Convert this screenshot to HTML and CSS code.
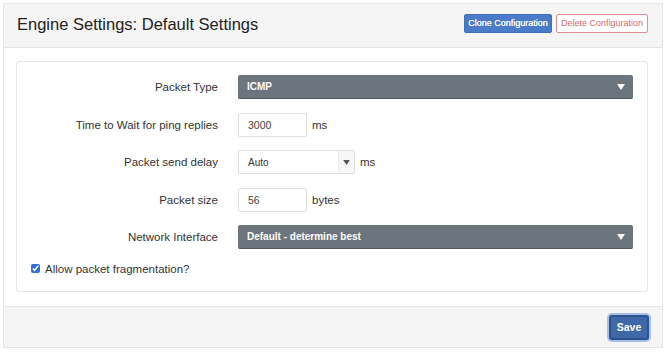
FILE: index.html
```html
<!DOCTYPE html>
<html lang="en">
<head>
    <meta charset="UTF-8">
    <meta name="viewport" content="width=device-width, initial-scale=1.0">
    <title>Engine Settings</title>
    <link rel="stylesheet" href="styles.css">
</head>
<body>
    <div class="panel">
        <div class="panel-header">
            <h2 class="titulo">Engine Settings: Default Settings</h2>
            <div class="actions">
                <button class="btn btn-blue" type="button">Clone Configuration</button>
                <button class="btn btn-delete" type="button">Delete Configuration</button>
            </div>
        </div>

        <div class="panel-body">
            <div class="card">
                <div class="form-row">
                    <label class="label">Packet Type</label>
                    <div class="select select-dark select-wide">
                        <span>ICMP</span>
                        <svg class="caret" width="8" height="6" viewBox="0 0 8 6"><path d="M0 0 L8 0 L4 6 Z" fill="#fff"/></svg>
                    </div>
                </div>
                <div class="form-row">
                    <label class="label">Time to Wait for ping replies</label>
                    <input class="input" type="text" value="3000">
                    <span class="unit">ms</span>
                </div>
                <div class="form-row">
                    <label class="label">Packet send delay</label>
                    <div class="select select-light">
                        <span class="select-text">Auto</span>
                        <span class="select-arrow">
                            <svg width="7" height="5" viewBox="0 0 8 6"><path d="M0 0 L8 0 L4 6 Z" fill="#555"/></svg>
                        </span>
                    </div>
                    <span class="unit">ms</span>
                </div>
                <div class="form-row">
                    <label class="label">Packet size</label>
                    <input class="input" type="text" value="56">
                    <span class="unit">bytes</span>
                </div>
                <div class="form-row">
                    <label class="label">Network Interface</label>
                    <div class="select select-dark select-wide">
                        <span>Default - determine best</span>
                        <svg class="caret" width="8" height="6" viewBox="0 0 8 6"><path d="M0 0 L8 0 L4 6 Z" fill="#fff"/></svg>
                    </div>
                </div>
                <div class="check-row">
                    <input type="checkbox" id="frag" checked>
                    <label for="frag">Allow packet fragmentation?</label>
                </div>
            </div>
        </div>

        <div class="panel-footer">
            <button class="btn btn-save" type="button">Save</button>
        </div>
    </div>
</body>
</html>
```

FILE: styles.css
```css
body {
    margin: 0;
    background-color: #ffffff;
    font-family: "Liberation Sans", Arial, sans-serif;
    color: #222222;
}

.panel {
    margin: 3px;
    border: 1px solid #e6e6e6;
    width: 658px;
}

.panel-header {
    background-color: #f5f5f5;
    border-bottom: 1px solid #e3e3e3;
    height: 43px;
    display: flex;
    align-items: center;
    justify-content: space-between;
    padding: 0 14px 0 13px;
}

.titulo {
    margin: 0;
    font-size: 16.5px;
    font-weight: normal;
    color: #222222;
    margin-top: -3px;
}

.actions {
    display: flex;
    gap: 4px;
    margin-top: -5px;
}

.btn {
    font-family: "Liberation Sans", Arial, sans-serif;
    font-size: 9px;
    height: 19px;
    padding: 0;
    border-radius: 2px;
    white-space: nowrap;
    cursor: pointer;
}

.btn-blue {
    background-color: #4a7bc8;
    border: 1px solid #3f6fbd;
    color: #ffffff;
    width: 88px;
    text-shadow: 0 0 0.5px #ffffff;
}

.btn-delete {
    background-color: #ffffff;
    border: 1px solid #dc8e92;
    color: #d46a6f;
    width: 92px;
}

.panel-body {
    padding: 13px 14px 14px 12px;
}

.card {
    border: 1px solid #e6e6e6;
    border-radius: 3px;
    padding: 13px 14px 13px 14px;
    display: flex;
    flex-direction: column;
    gap: 13.5px;
}

.form-row {
    display: flex;
    align-items: center;
    height: 24px;
}

.label {
    box-sizing: border-box;
    width: 187px;
    flex-shrink: 0;
    text-align: right;
    margin-right: 20px;
    font-size: 11.5px;
    color: #333333;
}

.input {
    box-sizing: border-box;
    width: 69px;
    height: 24px;
    border: 1px solid #dedede;
    border-radius: 2px;
    padding: 0 9px;
    font-family: "Liberation Sans", Arial, sans-serif;
    font-size: 10.5px;
    color: #444444;
}

.unit {
    font-size: 11.5px;
    margin-left: 5px;
    color: #333333;
}

.select {
    box-sizing: border-box;
    height: 24px;
    display: flex;
    align-items: center;
    font-size: 10px;
}

.select-dark {
    background-color: #6c757d;
    color: #ffffff;
    font-weight: bold;
    border-radius: 2px;
    padding: 0 8px 0 9px;
    justify-content: space-between;
    border-bottom: 1px solid #4f565c;
}

.select-wide {
    width: 395px;
}

.select-light {
    width: 117px;
    border: 1px solid #dedede;
    border-radius: 2px;
    color: #333333;
}

.select-text {
    flex: 1;
    padding-left: 9px;
}

.select-arrow {
    width: 15px;
    height: 100%;
    background-color: #f7f7f7;
    border-left: 1px solid #e8e8e8;
    display: flex;
    align-items: center;
    justify-content: center;
}

.check-row {
    display: flex;
    align-items: center;
    height: 14px;
    margin: -1px 0 2px 0;
    font-size: 11.5px;
    color: #333333;
}

.check-row input {
    margin: 0 5px 0 0;
    width: 9px;
    height: 9px;
    accent-color: #2f6fdc;
}

.panel-footer {
    background-color: #f5f5f5;
    border-top: 1px solid #e6e6e6;
    height: 40px;
    display: flex;
    align-items: center;
    justify-content: flex-end;
    padding: 0 13px;
}

.btn-save {
    background-color: #3f68a8;
    border: 2px solid #2c5290;
    box-shadow: 0 0 0 2px #a8bfe6;
    color: #ffffff;
    font-weight: bold;
    font-size: 10.5px;
    width: 40px;
    height: 25px;
    padding: 0;
    border-radius: 3px;
    margin-top: 1px;
}
```
